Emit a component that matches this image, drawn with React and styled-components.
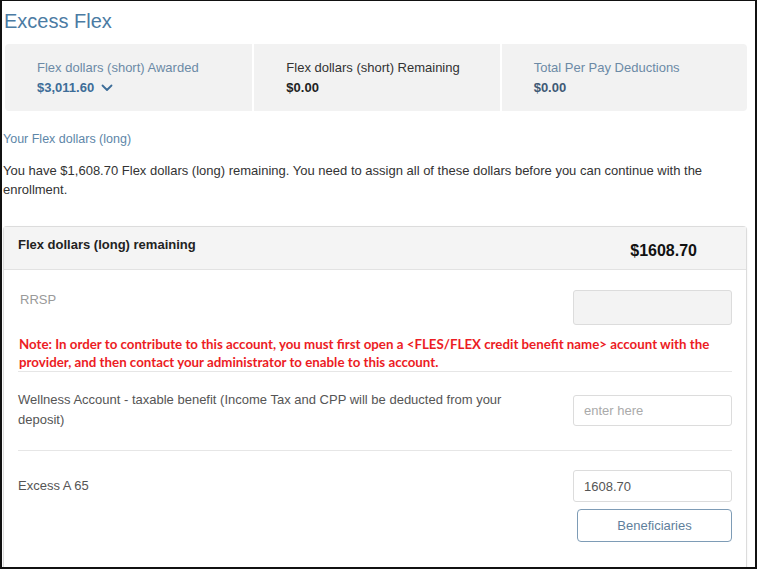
import styled, { createGlobalStyle } from 'styled-components'

const GlobalStyle = createGlobalStyle`
  html, body {
    margin: 0;
    padding: 0;
    background: #ffffff;
  }
  body {
    font-family: 'Liberation Sans', Arial, sans-serif;
    color: #333333;
  }
`

const Frame = styled.div`
  width: 757px;
  height: 569px;
  box-sizing: border-box;
  border: 2px solid #111111;
  border-top-width: 1px;
  overflow: hidden;
  padding: 0 8px 0 0;
  display: flex;
  flex-direction: column;
`

const Title = styled.h1`
  margin: 8px 0 0 2px;
  font-size: 20px;
  font-weight: 400;
  color: #4b7ba3;
  line-height: 24px;
`

const SummaryBar = styled.div`
  margin: 11px 0 0 3px;
  height: 67px;
  background: #f2f2f2;
  border-radius: 4px;
  display: grid;
  grid-template-columns: 1fr 1fr 1fr;
`

const SummaryCell = styled.div`
  padding: 16px 0 0 32px;
  border-left: ${(p) => (p.first ? 'none' : '2px solid #ffffff')};
  display: flex;
  flex-direction: column;
  gap: 3px;
`

const SummaryLabel = styled.div`
  font-size: 13px;
  line-height: 16px;
  color: ${(p) => p.color || '#333333'};
`

const SummaryValue = styled.div`
  font-size: 13px;
  font-weight: 700;
  line-height: 17px;
  color: ${(p) => p.color || '#333333'};
  display: flex;
  align-items: center;
  gap: 7px;
`

const SubHeading = styled.div`
  margin: 20px 0 0 1px;
  font-size: 12.5px;
  color: #5d86a8;
  line-height: 16px;
`

const Paragraph = styled.p`
  margin: 14px 0 0 1px;
  font-size: 13px;
  line-height: 19px;
  color: #333333;
`

const Card = styled.div`
  margin: 27px 0 0 1px;
  border: 1px solid #dcdcdc;
  border-bottom: none;
  border-radius: 4px 4px 0 0;
  flex: 1;
  box-shadow: 0 1px 2px rgba(0, 0, 0, 0.08);
`

const CardHeader = styled.div`
  height: 42px;
  background: #f4f4f4;
  border-bottom: 1px solid #e2e2e2;
  display: flex;
  justify-content: space-between;
  padding: 0 49px 0 14px;
`

const HeaderLabel = styled.div`
  font-size: 13px;
  font-weight: 700;
  color: #222222;
  padding-top: 10px;
`

const HeaderAmount = styled.div`
  font-size: 16px;
  font-weight: 700;
  color: #111111;
  padding-top: 15px;
`

const Body = styled.div`
  padding: 0 14px 0 14px;
`

const Row = styled.div`
  display: flex;
  justify-content: space-between;
  align-items: flex-start;
  padding: ${(p) => p.pad || '20px 0 0 0'};
  border-bottom: ${(p) => (p.divider ? '1px solid #e6e6e6' : 'none')};
`

const RowLabel = styled.div`
  font-size: 13px;
  line-height: 20px;
  color: ${(p) => (p.muted ? '#9a9a9a' : '#555555')};
  width: 500px;
  margin-top: ${(p) => p.top || '0'};
  padding-left: ${(p) => p.indent || '0'};
`

const Controls = styled.div`
  display: flex;
  flex-direction: column;
  align-items: flex-end;
  gap: 7px;
`

const Field = styled.input`
  width: 159px;
  height: ${(p) => p.h || '35px'};
  box-sizing: border-box;
  border: 1px solid #dcdcdc;
  border-radius: 3px;
  background: ${(p) => (p.disabled ? '#f3f3f3' : '#ffffff')};
  padding: 0 10px;
  font-family: 'Liberation Sans', Arial, sans-serif;
  font-size: 13px;
  color: #555555;
  outline: none;

  &::placeholder {
    color: #aaaaaa;
  }
`

const Button = styled.button`
  width: 155px;
  height: 33px;
  box-sizing: border-box;
  border: 1px solid #7e9cb6;
  border-radius: 4px;
  background: #ffffff;
  font-family: 'Liberation Sans', Arial, sans-serif;
  font-size: 13px;
  color: #5f7f9c;
  cursor: pointer;
`

const Note = styled.div`
  font-family: Lato, 'Open Sans', sans-serif;
  font-weight: 700;
  font-size: 13.3px;
  line-height: 18px;
  color: #ec1c24;
  padding: 10px 0 0 1px;
  margin-right: -22px;
`

const Divider = styled.div`
  height: 1px;
  background: #e6e6e6;
`

const Chevron = () => (
  <svg width="12" height="8" viewBox="0 0 12 8" fill="none">
    <path d="M1.5 1.5L6 6L10.5 1.5" stroke="#3d6d98" strokeWidth="1.8" strokeLinecap="round" strokeLinejoin="round" />
  </svg>
)

export default function App() {
  return (
    <Frame>
      <GlobalStyle />
      <Title>Excess Flex</Title>
      <SummaryBar>
        <SummaryCell first>
          <SummaryLabel color="#6c8aa6">Flex dollars (short) Awarded</SummaryLabel>
          <SummaryValue color="#3d6d98">
            $3,011.60 <Chevron />
          </SummaryValue>
        </SummaryCell>
        <SummaryCell>
          <SummaryLabel color="#333333">Flex dollars (short) Remaining</SummaryLabel>
          <SummaryValue color="#222222">$0.00</SummaryValue>
        </SummaryCell>
        <SummaryCell>
          <SummaryLabel color="#6c8aa6">Total Per Pay Deductions</SummaryLabel>
          <SummaryValue color="#3f5a75">$0.00</SummaryValue>
        </SummaryCell>
      </SummaryBar>

      <SubHeading>Your Flex dollars (long)</SubHeading>
      <Paragraph>
        You have $1,608.70 Flex dollars (long) remaining. You need to assign all of these dollars before you can continue with the
        enrollment.
      </Paragraph>

      <Card>
        <CardHeader>
          <HeaderLabel>Flex dollars (long) remaining</HeaderLabel>
          <HeaderAmount>$1608.70</HeaderAmount>
        </CardHeader>
        <Body>
          <Row pad="20px 0 0 0">
            <RowLabel muted indent="2px">RRSP</RowLabel>
            <Field disabled />
          </Row>
          <Note>
            Note: In order to contribute to this account, you must first open a &lt;FLES/FLEX credit benefit name&gt; account with the
            provider, and then contact your administrator to enable to this account.
          </Note>
          <Divider />
          <Row pad="23px 0 20px 0" divider>
            <RowLabel top="-5px">Wellness Account - taxable benefit (Income Tax and CPP will be deducted from your deposit)</RowLabel>
            <Field placeholder="enter here" h="31px" />
          </Row>
          <Row pad="19px 0 0 0">
            <RowLabel top="6px">Excess A 65</RowLabel>
            <Controls>
              <Field defaultValue="1608.70" h="32px" />
              <Button>Beneficiaries</Button>
            </Controls>
          </Row>
        </Body>
      </Card>
    </Frame>
  )
}
